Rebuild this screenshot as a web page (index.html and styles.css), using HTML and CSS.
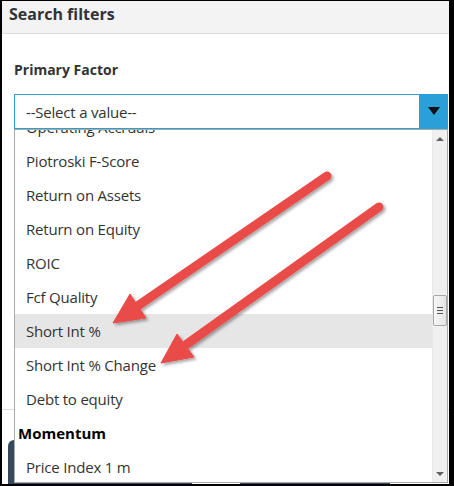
FILE: index.html
```html
<!DOCTYPE html>
<html lang="en">
<head>
    <meta charset="UTF-8">
    <meta name="viewport" content="width=device-width, initial-scale=1.0">
    <title>Search filters</title>
    <link rel="stylesheet" href="styles.css">
</head>
<body>
    <div class="frame">
        <div class="header">Search filters</div>

        <div class="content">
            <label class="field-label">Primary Factor</label>
            <div class="select">
                <div class="select-value">--Select a value--</div>
                <div class="select-btn"><span class="caret"></span></div>
            </div>
        </div>

        <div class="footer">
            <div class="btn btn-wide"></div>
            <div class="btn btn-narrow"></div>
        </div>

        <!-- open dropdown of the select, scrolled a little -->
        <div class="dropdown">
            <div class="options-view">
                <ul class="options">
                    <li>Operating Accruals</li>
                    <li>Piotroski F-Score</li>
                    <li>Return on Assets</li>
                    <li>Return on Equity</li>
                    <li>ROIC</li>
                    <li>Fcf Quality</li>
                    <li class="hover">Short Int %</li>
                    <li>Short Int % Change</li>
                    <li>Debt to equity</li>
                    <li class="group">Momentum</li>
                    <li>Price Index 1 m</li>
                </ul>
            </div>
            <div class="scrollbar">
                <div class="scroll-arrow"><span class="tri-up"></span></div>
                <div class="scroll-track">
                    <div class="thumb"><span></span><span></span><span></span></div>
                </div>
                <div class="scroll-arrow"><span class="tri-down"></span></div>
            </div>
        </div>
    </div>

    <svg class="arrows" width="454" height="486" viewBox="0 0 454 486">
        <defs>
            <filter id="shadow" x="-20%" y="-20%" width="140%" height="140%">
                <feDropShadow dx="2" dy="2" stdDeviation="1.5" flood-color="#000" flood-opacity="0.35"/>
            </filter>
        </defs>
        <g filter="url(#shadow)" fill="#e94b49" stroke="#e94b49">
            <line x1="327" y1="176" x2="139" y2="305" stroke-width="9" stroke-linecap="round"/>
            <polygon points="113,323 146,318 130,294" stroke-width="1" stroke-linejoin="round"/>
            <line x1="379" y1="207" x2="187" y2="344" stroke-width="9" stroke-linecap="round"/>
            <polygon points="161,363 194,357 177,334" stroke-width="1" stroke-linejoin="round"/>
        </g>
    </svg>
</body>
</html>
```

FILE: styles.css
```css
body {
    margin: 0;
    font-family: "Open Sans", Arial, sans-serif;
    background: #fff;
}
.frame {
    position: relative;
    width: 454px;
    height: 486px;
    box-sizing: border-box;
    border-style: solid;
    border-color: #000;
    border-width: 1px 5px 2px 2px;
    background: #fff;
    overflow: hidden;
    display: flex;
    flex-direction: column;
}
.header {
    background: #f3f3f3;
    border-bottom: 1px solid #dcdcdc;
    padding: 0 7px 6px;
    line-height: 26px;
    font-size: 16px;
    font-weight: 700;
    color: #333;
}
.content {
    flex: 1;
    padding: 26px 0 0 12px;
}
.field-label {
    display: block;
    font-size: 14px;
    font-weight: 700;
    line-height: 20px;
    color: #333;
    margin-bottom: 14px;
}
.select {
    display: flex;
    width: 434px;
    height: 35px;
}
.select-value {
    flex: 1;
    border: 1px solid #2a9fd8;
    border-right: 0;
    padding: 1px 0 0 11px;
    font-size: 15px;
    letter-spacing: -0.2px;
    line-height: 32px;
    color: #333;
}
.select-btn {
    width: 29px;
    background: #2a9fd8;
    display: flex;
    align-items: center;
    justify-content: center;
}
.caret {
    width: 0;
    height: 0;
    border-left: 6px solid transparent;
    border-right: 6px solid transparent;
    border-top: 8px solid #111;
    margin-top: -2px;
}
.footer {
    flex-shrink: 0;
    height: 75px;
    box-sizing: border-box;
    border-top: 1px solid #dcdcdc;
    padding: 30px 0 0 6px;
    display: flex;
    gap: 48px;
}
.btn {
    height: 50px;
    background: #34495e;
    border-radius: 6px;
}
.btn-wide { width: 184px; }
.btn-narrow { width: 150px; }

.dropdown {
    position: absolute;
    left: 12px;
    top: 128px;
    width: 434px;
    height: 354px;
    box-sizing: border-box;
    border: 1px solid #a9a9a9;
    background: #fff;
    display: flex;
}
.options-view {
    flex: 1;
    overflow: hidden;
}
.options {
    list-style: none;
    margin: -20px 0 0;
    padding: 0;
}
.options li {
    height: 34px;
    line-height: 34px;
    padding-left: 11px;
    font-size: 15px;
    letter-spacing: -0.2px;
    color: #333;
    white-space: nowrap;
}
.options li.hover {
    background: #e6e6e6;
}
.options li.group {
    padding-left: 3px;
    font-size: 15px;
    font-weight: 700;
    letter-spacing: 0;
    color: #000;
}
.scrollbar {
    width: 15px;
    background: #f0f0f0;
    border-left: 1px solid #e9e9e9;
    box-sizing: border-box;
    display: flex;
    flex-direction: column;
}
.scroll-arrow {
    height: 17px;
    display: flex;
    align-items: center;
    justify-content: center;
}
.tri-up, .tri-down {
    width: 0;
    height: 0;
    border-left: 4px solid transparent;
    border-right: 4px solid transparent;
}
.tri-up { border-bottom: 4px solid #606060; }
.tri-down { border-top: 4px solid #606060; }
.scroll-track {
    flex: 1;
}
.thumb {
    margin: 148px 0 0 0;
    height: 31px;
    box-sizing: border-box;
    border: 1px solid #a8a8a8;
    border-radius: 2px;
    background: linear-gradient(to right, #f7f7f7, #e4e4e4);
    display: flex;
    flex-direction: column;
    align-items: center;
    justify-content: center;
    gap: 2px;
}
.thumb span {
    width: 6px;
    height: 1px;
    background: #555;
}
.arrows {
    position: absolute;
    left: 0;
    top: 0;
    pointer-events: none;
}
```
